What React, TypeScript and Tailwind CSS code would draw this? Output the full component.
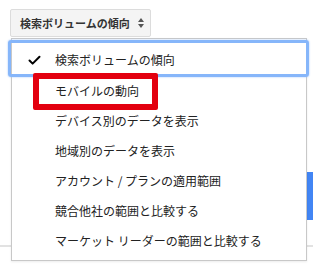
import { Check } from "lucide-react"

const items = [
  "モバイルの動向",
  "デバイス別のデータを表示",
  "地域別のデータを表示",
  "アカウント / プランの適用範囲",
  "競合他社の範囲と比較する",
  "マーケット リーダーの範囲と比較する",
]

export default function App() {
  return (
    <div
      className="relative w-[313px] h-[266px] overflow-hidden bg-white text-[#222]"
      style={{ fontFamily: '"Noto Sans CJK JP", "Noto Sans", sans-serif' }}
    >
      {/* page underneath the menu */}
      <div className="flex flex-col">
        <div className="pt-[9px] pl-[10px]">
          <button className="flex items-center h-[28px] w-[141px] pl-[9px] border border-[#dcdcdc] rounded-[2px] bg-[#f4f4f4] text-[11px] font-bold text-[#333]">
            <span>検索ボリュームの傾向</span>
            <span className="ml-[8px] flex flex-col items-center gap-[2px]">
              <span className="w-0 h-0 border-l-[3px] border-r-[3px] border-b-[4px] border-l-transparent border-r-transparent border-b-[#555]" />
              <span className="w-0 h-0 border-l-[3px] border-r-[3px] border-t-[4px] border-l-transparent border-r-transparent border-t-[#555]" />
            </span>
          </button>
        </div>
        <div className="mt-[135px] flex justify-end">
          <div className="w-[7px] h-[48px] bg-[#4285f4]" />
        </div>
        <div className="mt-[25px] h-[2px] bg-[#e2e2e2]" />
      </div>

      {/* dropdown menu */}
      <div className="absolute left-[11px] top-[38px] w-[296px] border border-[#c8c8c8] bg-white pt-[5px] pb-[4px] text-[12px] shadow-[0_1px_2px_rgba(0,0,0,0.08)]">
        <div className="relative flex items-center h-[32px] pl-[15px]">
          <div className="absolute -top-[4px] -bottom-[1px] -left-[4px] -right-[3px] rounded-[3px] border-[3px] border-[#86b6fa] shadow-[0_0_2px_#9cc3fb]" />
          <Check className="w-[15px] h-[15px] text-black" strokeWidth={3.2} />
          <span className="ml-[13px]">検索ボリュームの傾向</span>
        </div>
        {items.map((t) => (
          <div key={t} className="flex items-center h-[30px] pl-[43px]">
            {t}
          </div>
        ))}
      </div>

      {/* red annotation box */}
      <div className="absolute left-[33px] top-[73px] w-[125px] h-[37px] border-[6px] border-[#e3000f] rounded-[2px]" />
    </div>
  )
}
